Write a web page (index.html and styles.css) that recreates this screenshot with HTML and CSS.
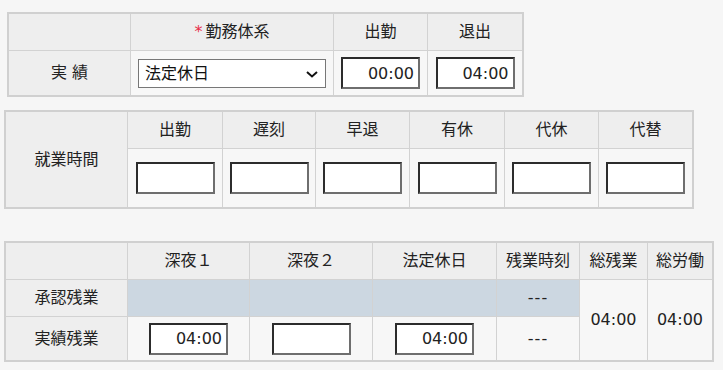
FILE: index.html
```html
<!DOCTYPE html>
<html lang="ja">
<head>
<meta charset="utf-8">
<title>勤務実績</title>
<link rel="stylesheet" href="styles.css">
</head>
<body>
<div class="page">
  <div class="grid g1">
    <div class="cell head"></div>
    <div class="cell head"><span class="req">*</span>勤務体系</div>
    <div class="cell head">出勤</div>
    <div class="cell head">退出</div>
    <div class="cell label">実 績</div>
    <div class="cell body">
      <div class="select-wrap">
        <select class="select">
          <option>法定休日</option>
        </select>
        <svg class="chev" width="12" height="7" viewBox="0 0 12 7"><path d="M1 1 L6 5.5 L11 1" fill="none" stroke="#111" stroke-width="2"/></svg>
      </div>
    </div>
    <div class="cell body"><input class="time" type="text" value="00:00"></div>
    <div class="cell body"><input class="time" type="text" value="04:00"></div>
  </div>

  <div class="grid g2">
    <div class="cell label span2">就業時間</div>
    <div class="cell head">出勤</div>
    <div class="cell head">遅刻</div>
    <div class="cell head">早退</div>
    <div class="cell head">有休</div>
    <div class="cell head">代休</div>
    <div class="cell head">代替</div>
    <div class="cell body"><input class="time" type="text" value=""></div>
    <div class="cell body"><input class="time" type="text" value=""></div>
    <div class="cell body"><input class="time" type="text" value=""></div>
    <div class="cell body"><input class="time" type="text" value=""></div>
    <div class="cell body"><input class="time" type="text" value=""></div>
    <div class="cell body"><input class="time" type="text" value=""></div>
  </div>

  <div class="grid g3">
    <div class="cell head"></div>
    <div class="cell head">深夜１</div>
    <div class="cell head">深夜２</div>
    <div class="cell head">法定休日</div>
    <div class="cell head">残業時刻</div>
    <div class="cell head">総残業</div>
    <div class="cell head">総労働</div>

    <div class="cell label">承認残業</div>
    <div class="cell approved"></div>
    <div class="cell approved"></div>
    <div class="cell approved"></div>
    <div class="cell approved num dash">---</div>
    <div class="cell body num span2">04:00</div>
    <div class="cell body num span2">04:00</div>

    <div class="cell label">実績残業</div>
    <div class="cell body"><input class="time" type="text" value="04:00"></div>
    <div class="cell body"><input class="time" type="text" value=""></div>
    <div class="cell body"><input class="time" type="text" value="04:00"></div>
    <div class="cell body num dash">---</div>
  </div>
</div>
</body>
</html>
```
FILE: styles.css
```css
html, body {
  margin: 0;
  padding: 0;
  background: #f6f6f6;
}

body {
  font-family: "DejaVu Sans", "Noto Sans CJK JP", sans-serif;
  font-size: 16px;
  color: #222;
}

.page {
  padding: 12px 0 0 4px;
  display: flex;
  flex-direction: column;
  align-items: flex-start;
}

.grid {
  display: grid;
  gap: 1px;
  background: #d2d2d2;
  border: 2px solid #d0d0d0;
}

.g1 {
  margin-left: 3px;
  grid-template-columns: 121px 202px 93px 94px;
  grid-template-rows: 36px 44px;
}

.g2 {
  margin-top: 13px;
  grid-template-columns: 121px 94px 92px 93px 94px 93px 93px;
  grid-template-rows: 36px 58px;
}

.g3 {
  margin-top: 32px;
  grid-template-columns: 121px 121px 122px 123px 82px 67px 64px;
  grid-template-rows: 36px 36px 43px;
}

.cell {
  display: flex;
  align-items: center;
  justify-content: center;
  white-space: nowrap;
  line-height: 1;
}

.head,
.label {
  background: #eeeeee;
}

.body {
  background: #f7f7f7;
}

.approved {
  background: #ccd7e1;
}

.span2 {
  grid-row: span 2;
}

.req {
  color: #e8304a;
  margin-right: 3px;
}

.select-wrap {
  position: relative;
  width: 188px;
  height: 29px;
}

.select {
  appearance: none;
  -webkit-appearance: none;
  box-sizing: border-box;
  width: 188px;
  height: 29px;
  margin: 0;
  padding: 0 0 0 6px;
  border: 1px solid #777;
  border-radius: 0;
  background: #fff;
  font-family: "DejaVu Sans", "Noto Sans CJK JP", sans-serif;
  font-size: 16px;
  color: #111;
  outline: none;
}

.chev {
  position: absolute;
  right: 8px;
  top: 12px;
  pointer-events: none;
}

.time {
  box-sizing: border-box;
  width: 79px;
  height: 32px;
  margin: 0;
  padding: 0 4px 0 0;
  border: 2px solid;
  border-color: #2c2c2c #6e6e6e #6e6e6e #2c2c2c;
  border-radius: 0;
  background: #fff;
  font-family: "DejaVu Sans", "Noto Sans CJK JP", sans-serif;
  font-size: 16px;
  color: #222;
  text-align: right;
  outline: none;
}

.num {
  font-family: "DejaVu Sans", sans-serif;
}

.dash {
  letter-spacing: 1px;
}
```
